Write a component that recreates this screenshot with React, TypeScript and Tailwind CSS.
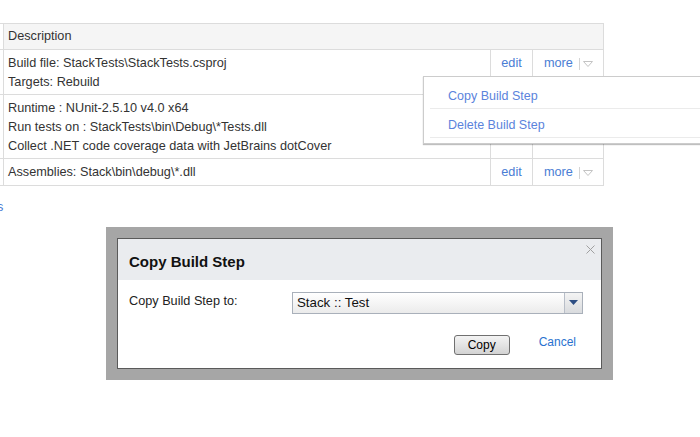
import React from "react";

function MoreArrow() {
  return (
    <span className="ml-[6px] flex items-center">
      <span className="h-[12px] w-px bg-[#d4d4d4]" />
      <svg width="10" height="7" viewBox="0 0 10 7" className="ml-[3px] mt-[2px]">
        <path d="M0.5 0.5 L9.5 0.5 L5 5.5 Z" fill="none" stroke="#c4c4c4" strokeWidth="1" />
      </svg>
    </span>
  );
}

function Row({ h, lines, actions = true }: { h: string; lines: string[]; actions?: boolean }) {
  return (
    <div className={`flex border-b border-[#dcdcdc] ${h}`}>
      <div className="w-[13px] shrink-0" />
      <div className="flex-1 border-l border-[#dcdcdc] pl-[4px] pt-[4px] leading-[19px] text-[#333]">
        {lines.map((l, i) => (
          <div key={i}>{l}</div>
        ))}
      </div>
      <div className="w-[42px] shrink-0 border-l border-[#dcdcdc] pt-[4px] text-center leading-[19px] text-[#4a7dd4]">
        {actions ? "edit" : null}
      </div>
      <div className="flex w-[71px] shrink-0 items-start border-l border-[#dcdcdc] pl-[11px] pt-[4px] leading-[19px] text-[#4a7dd4]">
        {actions ? (
          <>
            <span>more</span>
            <span className="flex h-[19px] items-center"><MoreArrow /></span>
          </>
        ) : null}
      </div>
    </div>
  );
}

export default function App() {
  return (
    <div className="relative h-[437px] w-[700px] overflow-hidden bg-white font-['Liberation_Sans',Arial,sans-serif] text-[12.7px]">
      <div className="ml-[-10px] mt-[23px] w-[614px] border-r border-t border-[#dcdcdc]">
        <div className="flex h-[26px] border-b border-[#dcdcdc] bg-[#f5f5f5]">
          <div className="w-[13px] shrink-0 bg-white" />
          <div className="flex flex-1 items-center border-l border-[#dcdcdc] pl-[4px] text-[#333]">
            Description
          </div>
        </div>
        <Row h="h-[45px]" lines={["Build file: StackTests\\StackTests.csproj", "Targets: Rebuild"]} />
        <Row
          h="h-[64px]"
          actions={false}
          lines={[
            "Runtime : NUnit-2.5.10 v4.0 x64",
            "Run tests on : StackTests\\bin\\Debug\\*Tests.dll",
            "Collect .NET code coverage data with JetBrains dotCover",
          ]}
        />
        <Row h="h-[27px]" lines={["Assemblies: Stack\\bin\\debug\\*.dll"]} />
      </div>
      <div className="ml-[-3px] mt-[12px] text-[#4a7dd4]">s</div>

      {/* dropdown menu */}
      <div className="absolute left-[423px] top-[76px] w-[300px] border border-[#cccccc] bg-white pb-[5px] pl-[6px] pt-[3px] text-[12.5px] text-[#5b83dc] shadow-[0_1px_1px_rgba(0,0,0,0.25)]">
        <div className="flex h-[29px] items-center border-b border-[#ebebeb] pl-[18px] pt-[4px]">Copy Build Step</div>
        <div className="flex h-[29px] items-center border-b border-[#ebebeb] pl-[18px] pt-[4px]">Delete Build Step</div>
      </div>

      {/* dialog */}
      <div className="absolute left-[106px] top-[227px] w-[507px] bg-[#a6a6a6] p-[11px]">
        <div className="border border-[#5a5a5a] bg-white">
          <div className="flex h-[41px] items-start bg-[#eaecef]">
            <div className="pl-[11px] pt-[14px] text-[15px] font-bold leading-[17px] text-[#111]">Copy Build Step</div>
            <svg width="9" height="9" viewBox="0 0 9 9" className="ml-auto mr-[6px] mt-[6px]">
              <path d="M0.5 0.5 L8.5 8.5 M8.5 0.5 L0.5 8.5" stroke="#a0a0a0" strokeWidth="1" />
            </svg>
          </div>
          <div className="flex items-start pl-[11px] pt-[12px]">
            <div className="w-[163px] shrink-0 text-[#222]">Copy Build Step to:</div>
            <div className="flex h-[22px] w-[291px] items-stretch border border-[#a9b0ba] bg-[linear-gradient(#ffffff,#ebebeb)]">
              <div className="flex flex-1 items-center pl-[4px] text-[13.3px] text-[#111]">Stack :: Test</div>
              <div className="flex w-[18px] items-center justify-center border-l border-[#b8bec8] bg-[linear-gradient(#f4f4f4,#d9dbde)]">
                <svg width="9" height="6" viewBox="0 0 9 6">
                  <path d="M0 0 L9 0 L4.5 5 Z" fill="#2d4e84" />
                </svg>
              </div>
            </div>
          </div>
          <div className="flex items-start justify-end pb-[13px] pr-[25px] pt-[21px]">
            <button className="flex h-[20px] w-[56px] items-center justify-center rounded-[3px] border border-[#707070] bg-[linear-gradient(#f3f3f3,#e4e4e4_50%,#d3d3d3)] text-[12px] text-black">
              Copy
            </button>
            <span className="ml-[29px] mt-[-2px] text-[12px] text-[#2a72cf]">Cancel</span>
          </div>
        </div>
      </div>
    </div>
  );
}
